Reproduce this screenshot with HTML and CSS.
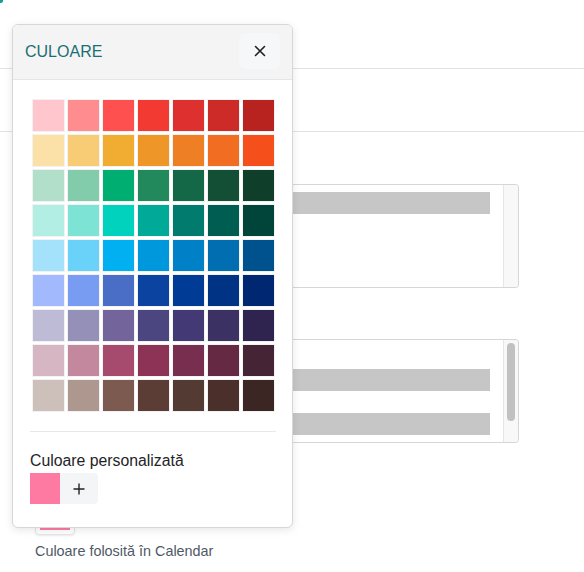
FILE: index.html
```html
<!DOCTYPE html>
<html lang="ro">
<head>
    <meta charset="UTF-8">
    <meta name="viewport" content="width=device-width, initial-scale=1.0">
    <title>Culoare</title>
    <link rel="stylesheet" href="styles.css">
</head>
<body>
    <div class="page">
        <div class="topbar"><span class="logo-dot"></span></div>
        <div class="tabs"></div>

        <div class="content">
            <div class="list-box">
                <div class="list-items">
                    <div class="bar"></div>
                </div>
                <div class="scroll-track"></div>
            </div>

            <div class="list-box second">
                <div class="list-items scrolled">
                    <div class="bar"></div>
                    <div class="bar"></div>
                </div>
                <div class="scroll-track"><div class="scroll-thumb"></div></div>
            </div>

            <div class="color-field">
                <div class="color-preview"><div class="color-preview-fill"></div></div>
                <div class="color-hint">Culoare folosită în Calendar</div>
            </div>
        </div>
    </div>

    <div class="popover">
        <div class="popover-header">
            <span class="popover-title">CULOARE</span>
            <button class="close-button" aria-label="Închide">
                <svg width="12" height="12" viewBox="0 0 12 12">
                    <path d="M1.5 1.5 L10.5 10.5 M10.5 1.5 L1.5 10.5" stroke="#1f1f1f" stroke-width="1.6" stroke-linecap="round"/>
                </svg>
            </button>
        </div>
        <div class="popover-body">
            <div class="palette" id="palette"></div>
            <div class="divider"></div>
            <div class="custom-label">Culoare personalizată</div>
            <div class="custom-row">
                <div class="custom-swatch"></div>
                <button class="add-button" aria-label="Adaugă">
                    <svg width="12" height="12" viewBox="0 0 12 12">
                        <path d="M6 0.5 V11.5 M0.5 6 H11.5" stroke="#222" stroke-width="1.4"/>
                    </svg>
                </button>
            </div>
        </div>
    </div>

    <script>
        const colors = [
            '#ffc6cd', '#ff8c8f', '#ff5050', '#f23a33', '#de302f', '#cc2b28', '#b8221f',
            '#fbe0a8', '#f7cc74', '#f1ad32', '#ef9628', '#ef7f24', '#f06d22', '#f5501b',
            '#b1dfc9', '#82ccab', '#00ae72', '#21895c', '#156847', '#134f35', '#0f3f2a',
            '#b2eee4', '#7de3d5', '#00d2be', '#00a998', '#007b6e', '#005d52', '#00443a',
            '#a3e2fa', '#6ad1f8', '#00b0f0', '#0098dc', '#0080c7', '#006eb0', '#00528e',
            '#a2b9fd', '#779cf1', '#4a6dc5', '#0a43a0', '#003c96', '#003384', '#002772',
            '#bdbbd6', '#9490b8', '#73649c', '#4b4580', '#433a75', '#3b3163', '#2f2450',
            '#d6b6c3', '#c3889e', '#a64b6d', '#8d3356', '#782e4e', '#652944', '#452436',
            '#cdbfba', '#ae978f', '#7c5a50', '#5c3d35', '#533a33', '#4a2f2a', '#3b2624'
        ];

        const palette = document.getElementById('palette');
        colors.forEach(function(color) {
            const swatch = document.createElement('div');
            swatch.className = 'swatch';
            swatch.style.backgroundColor = color;
            palette.appendChild(swatch);
        });
    </script>
</body>
</html>
```

FILE: styles.css
```css
body {
    margin: 0;
    padding: 0;
    font-family: "Liberation Sans", Arial, sans-serif;
    background-color: #fff;
    color: #1f2328;
    width: 584px;
    height: 572px;
    overflow: hidden;
    position: relative;
}

.topbar {
    height: 68px;
    border-bottom: 1px solid #dfe2e6;
    position: relative;
}

.logo-dot {
    position: absolute;
    left: -2px;
    top: -2px;
    width: 5px;
    height: 5px;
    border-radius: 50%;
    background-color: #13a08c;
}

.tabs {
    height: 62px;
    border-bottom: 1px solid #dfe2e6;
}

.content {
    padding: 52px 0 0 24px;
}

.list-box {
    display: flex;
    width: 494px;
    height: 102px;
    border: 1px solid #d3d7dc;
    border-left: none;
    border-radius: 0 4px 4px 0;
    overflow: hidden;
    margin-bottom: 51px;
}

.list-items {
    flex: 1;
    padding: 7px 13px 0 0;
    display: flex;
    flex-direction: column;
    gap: 22px;
}

.list-items.scrolled {
    padding-top: 29px;
}

.bar {
    height: 22px;
    background-color: #c6c6c6;
}

.scroll-track {
    box-sizing: border-box;
    width: 15px;
    background-color: #f8f8f8;
    border-left: 1px solid #e6e6e6;
    padding: 3px 0 0 3px;
}

.scroll-thumb {
    width: 8px;
    height: 78px;
    border-radius: 4px;
    background-color: #c1c1c1;
}

.list-box.second {
    margin-bottom: 56px;
}

.color-field {
    padding-left: 11px;
}

.color-preview {
    width: 30px;
    height: 26px;
    padding: 4px;
    border: 1px solid #e3e5e8;
    border-radius: 4px;
    box-shadow: 0 1px 2px rgba(0, 0, 0, 0.08);
}

.color-preview-fill {
    width: 30px;
    height: 26px;
    background-color: #ff7aa2;
}

.color-hint {
    margin-top: 6px;
    font-size: 14.4px;
    line-height: 20px;
    color: #4f5965;
}

.popover {
    position: absolute;
    left: 12px;
    top: 24px;
    width: 279px;
    height: 502px;
    background-color: #fff;
    border: 1px solid #d5d7db;
    border-radius: 6px;
    box-shadow: 0 2px 8px rgba(0, 0, 0, 0.1);
    overflow: hidden;
}

.popover-header {
    height: 54px;
    background-color: #f4f4f5;
    border-bottom: 1px solid #e3e5e8;
    display: flex;
    align-items: center;
    justify-content: space-between;
    padding: 0 12px;
}

.popover-title {
    font-size: 16px;
    color: #1b6e74;
    margin-top: -1px;
}

.close-button {
    width: 41px;
    height: 36px;
    border: none;
    border-radius: 6px;
    background-color: #f6f7f9;
    display: flex;
    align-items: center;
    justify-content: center;
    padding: 0;
    margin-top: -2px;
    cursor: pointer;
}

.popover-body {
    padding: 20px 16px 0 17px;
}

.palette {
    display: grid;
    grid-template-columns: repeat(7, 31px);
    grid-auto-rows: 31px;
    gap: 4px;
    justify-content: center;
}

.swatch {
    box-shadow: 0 0 0 1px rgba(0, 0, 0, 0.05);
}

.divider {
    height: 1px;
    background-color: #e6e8eb;
    margin-top: 20px;
}

.custom-label {
    margin-top: 19px;
    font-size: 15.8px;
    line-height: 20px;
    color: #1f2328;
}

.custom-row {
    display: flex;
    margin-top: 2px;
}

.custom-swatch {
    width: 30px;
    height: 31px;
    background-color: #ff7aa2;
}

.add-button {
    width: 38px;
    height: 31px;
    border: none;
    border-radius: 0 4px 4px 0;
    background-color: #f4f5f7;
    display: flex;
    align-items: center;
    justify-content: center;
    padding: 0;
    cursor: pointer;
}
```
